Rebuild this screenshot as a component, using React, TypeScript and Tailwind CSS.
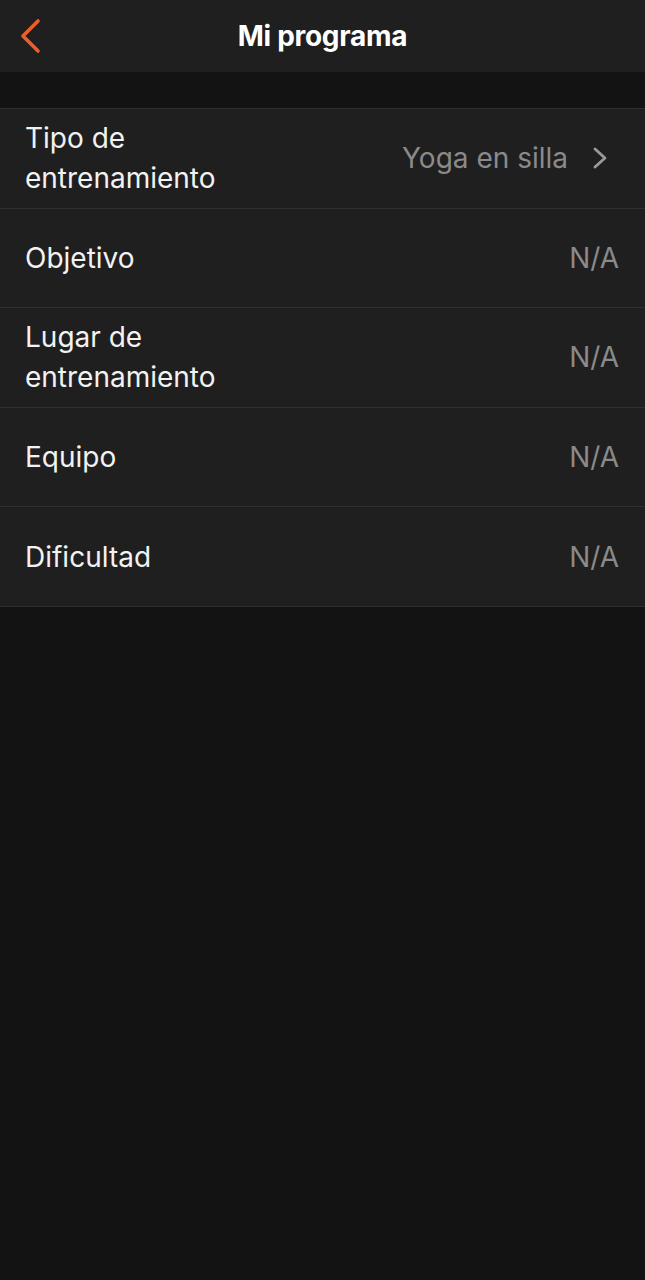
import React from 'react';

const rows: { label: string; value: string; link?: boolean }[] = [
  { label: 'Tipo de entrenamiento', value: 'Yoga en silla', link: true },
  { label: 'Objetivo', value: 'N/A' },
  { label: 'Lugar de entrenamiento', value: 'N/A' },
  { label: 'Equipo', value: 'N/A' },
  { label: 'Dificultad', value: 'N/A' },
];

const App: React.FC = () => {
  return (
    <div className="min-h-[1280px] w-[645px] bg-[#131313] font-['Inter',sans-serif] text-white">
      <header className="relative flex h-[72px] items-center justify-center bg-[#1f1f1f]">
        <button className="absolute left-[18px] top-[18px] p-0">
          <svg width="26" height="36" viewBox="0 0 26 36" fill="none">
            <path d="M20 3L5 18l15 15" stroke="#ec5f2a" strokeWidth="3.6" strokeLinecap="round" strokeLinejoin="round" />
          </svg>
        </button>
        <h1 className="text-[28px] font-bold tracking-[-0.3px]">Mi programa</h1>
      </header>

      <div className="h-9" />

      <ul className="border-t border-[#2f2f2f] bg-[#1f1f1f]">
        {rows.map((r) => (
          <li
            key={r.label}
            className="flex h-[99.6px] items-center justify-between border-b border-[#2f2f2f] pl-[25px] pr-[26px]"
          >
            <span className="max-w-[240px] text-[28px] leading-[40px] text-[#f2f2f2]">{r.label}</span>
            <span className="flex items-center text-[28px] text-[#8a8a8a]">
              {r.value}
              {r.link && (
                <svg width="16" height="26" viewBox="0 0 16 26" fill="none" className="ml-[24px] mr-[11px]">
                  <path d="M3 4l10 9-10 9" stroke="#9a9a9a" strokeWidth="2.8" strokeLinecap="round" strokeLinejoin="round" />
                </svg>
              )}
            </span>
          </li>
        ))}
      </ul>
    </div>
  );
};

export default App;
